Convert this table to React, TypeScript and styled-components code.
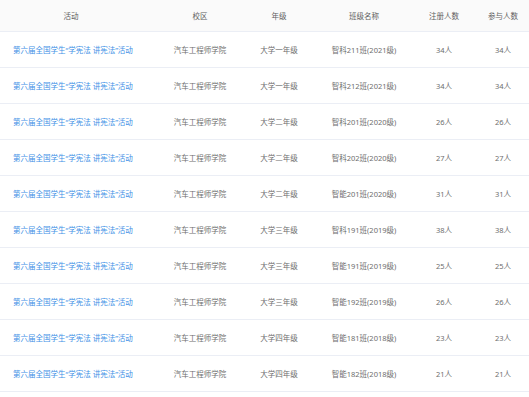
import styled, { createGlobalStyle } from "styled-components";

const GlobalStyle = createGlobalStyle`
  html, body {
    margin: 0;
    padding: 0;
    background: #fff;
    overflow: hidden;
  }
  body {
    font-family: "Noto Sans", "Noto Sans CJK SC", sans-serif;
  }
`;

type Row = {
  grade: string;
  klass: string;
  registered: number;
  joined: number;
};

const ACTIVITY = "第六届全国学生“学宪法 讲宪法”活动";
const CAMPUS = "汽车工程师学院";

const rows: Row[] = [
  { grade: "大学一年级", klass: "智科211班(2021级)", registered: 34, joined: 34 },
  { grade: "大学一年级", klass: "智科212班(2021级)", registered: 34, joined: 34 },
  { grade: "大学二年级", klass: "智科201班(2020级)", registered: 26, joined: 26 },
  { grade: "大学二年级", klass: "智科202班(2020级)", registered: 27, joined: 27 },
  { grade: "大学二年级", klass: "智能201班(2020级)", registered: 31, joined: 31 },
  { grade: "大学三年级", klass: "智科191班(2019级)", registered: 38, joined: 38 },
  { grade: "大学三年级", klass: "智能191班(2019级)", registered: 25, joined: 25 },
  { grade: "大学三年级", klass: "智能192班(2019级)", registered: 26, joined: 26 },
  { grade: "大学四年级", klass: "智能181班(2018级)", registered: 23, joined: 23 },
  { grade: "大学四年级", klass: "智能182班(2018级)", registered: 21, joined: 21 },
];

const App = () => {
  return (
    <>
      <GlobalStyle />
      <Table>
        <HeaderRow>
          <Cell>活动</Cell>
          <Cell>校区</Cell>
          <Cell>年级</Cell>
          <Cell>班级名称</Cell>
          <Cell>注册人数</Cell>
          <Cell>参与人数</Cell>
        </HeaderRow>
        {rows.map((r, i) => (
          <BodyRow key={i}>
            <Cell $left>
              <Link>{ACTIVITY}</Link>
            </Cell>
            <Cell>{CAMPUS}</Cell>
            <Cell>{r.grade}</Cell>
            <Cell>{r.klass}</Cell>
            <Cell>{r.registered}人</Cell>
            <Cell>{r.joined}人</Cell>
          </BodyRow>
        ))}
      </Table>
    </>
  );
};

const Table = styled.div`
  width: 529px;
  display: flex;
  flex-direction: column;
  font-size: 7.5px;
  color: #666;
`;

const HeaderRow = styled.div`
  display: grid;
  grid-template-columns: 142px 116px 42px 128px 32px 86px;
  height: 31px;
  background: #fafafa;
  border-bottom: 1px solid #ebeef5;
  color: #5f5f5f;
`;

const BodyRow = styled(HeaderRow)`
  height: 35px;
  background: #fff;
  color: #6e6e6e;
`;

const Cell = styled.div<{ $left?: boolean }>`
  display: flex;
  align-items: center;
  justify-content: ${(p) => (p.$left ? "flex-start" : "center")};
  padding-left: ${(p) => (p.$left ? "13px" : "0")};
  white-space: nowrap;
`;

const Link = styled.span`
  color: #4191e6;
`;

export default App;
